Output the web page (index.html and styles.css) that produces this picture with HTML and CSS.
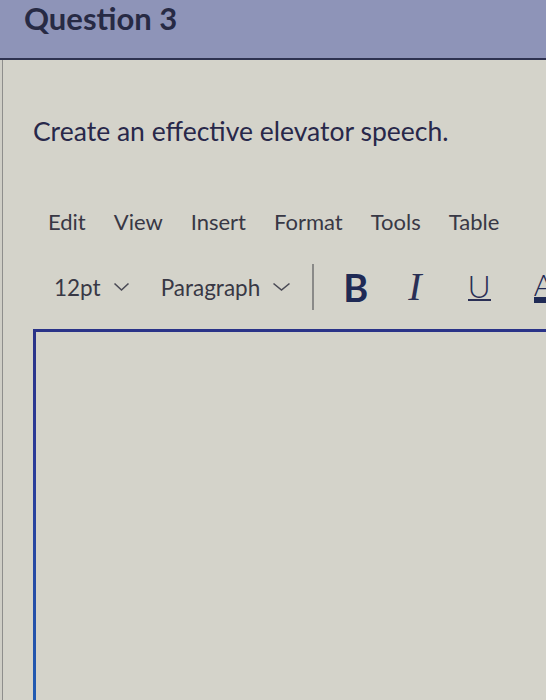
FILE: index.html
```html
<!DOCTYPE html>
<html>
<head>
<meta charset="utf-8">
<link rel="stylesheet" href="styles.css">
</head>
<body>
<div class="page">
  <header class="qhead">
    <h2 class="qtitle">Question 3</h2>
  </header>
  <main class="content">
    <p class="prompt">Create an effective elevator speech.</p>
    <div class="editor">
      <nav class="menubar">
        <span class="menu-item">Edit</span>
        <span class="menu-item">View</span>
        <span class="menu-item">Insert</span>
        <span class="menu-item">Format</span>
        <span class="menu-item">Tools</span>
        <span class="menu-item">Table</span>
      </nav>
      <div class="toolbar">
        <span class="dropdown size">12pt
          <svg class="chev" width="17" height="10" viewBox="0 0 17 10"><polyline points="1.5,1.5 8.5,8 15.5,1.5" fill="none" stroke="#4a4a55" stroke-width="1.6"/></svg>
        </span>
        <span class="dropdown para">Paragraph
          <svg class="chev" width="19" height="10" viewBox="0 0 19 10"><polyline points="1.5,1.5 9.5,8 17.5,1.5" fill="none" stroke="#4a4a55" stroke-width="1.6"/></svg>
        </span>
        <span class="sep"></span>
        <span class="tool bold">B</span>
        <span class="tool italic">I</span>
        <span class="tool under">U</span>
        <span class="tool color">A</span>
      </div>
      <div class="textbox"></div>
    </div>
  </main>
</div>
</body>
</html>
```
FILE: styles.css
```css
html, body {
  margin: 0;
  padding: 0;
  background: #d4d3ca;
}
.page {
  width: 546px;
  height: 700px;
  overflow: hidden;
  background: #d4d3ca;
  font-family: Lato, "Open Sans", sans-serif;
  color: #2c2c44;
  box-shadow: inset 2px 0 0 #cfcec6, inset 3px 0 0 #8e8e8c;
}
.qhead {
  height: 58px;
  background: #8e94b8;
  border-bottom: 2px solid #2e3250;
  padding-left: 24px;
}
.qtitle {
  margin: 0;
  font-size: 31px;
  line-height: 36px;
  font-weight: 700;
  color: #272a44;
}
.content {
  padding-left: 33px;
}
.prompt {
  margin: 55px 0 0 0;
  font-size: 26.5px;
  line-height: 33px;
  color: #28284a;
}
.editor {
  margin-top: 60px;
}
.menubar {
  display: flex;
  gap: 28px;
  padding-left: 15px;
  font-size: 22px;
  line-height: 28px;
  color: #383845;
}
.toolbar {
  display: flex;
  align-items: center;
  height: 50px;
  margin-top: 26px;
  padding-left: 21px;
  font-size: 22.5px;
  color: #383845;
  white-space: nowrap;
}
.toolbar > * {
  flex-shrink: 0;
}
.dropdown {
  display: flex;
  align-items: center;
}
.chev {
  margin-left: 12px;
}
.size {
  margin-right: 31px;
}
.sep {
  width: 2px;
  height: 46px;
  background: #8a8a88;
  margin-left: 21px;
  margin-right: 29px;
}
.tool {
  display: inline-block;
  color: #1f2a55;
}
.bold {
  font-size: 38px;
  font-weight: 700;
  line-height: 40px;
}
.italic {
  font-family: "Liberation Serif", serif;
  font-style: italic;
  font-size: 40px;
  line-height: 40px;
  margin-left: 40px;
  color: #2a2f55;
}
.under {
  font-size: 32px;
  font-weight: 300;
  line-height: 26px;
  margin-left: 46px;
  border-bottom: 2px solid #2a2f55;
  color: #2a2f55;
}
.color {
  font-size: 30px;
  font-weight: 300;
  line-height: 26px;
  margin-left: 43px;
  border-bottom: 6px solid #1f2a55;
}
.textbox {
  margin-top: 17px;
  margin-right: -40px;
  height: 420px;
  border: 3px solid #2b3590;
  border-image: linear-gradient(to bottom, #2a3388, #2a3a98 30%, #1f63b8) 1;
}
```
